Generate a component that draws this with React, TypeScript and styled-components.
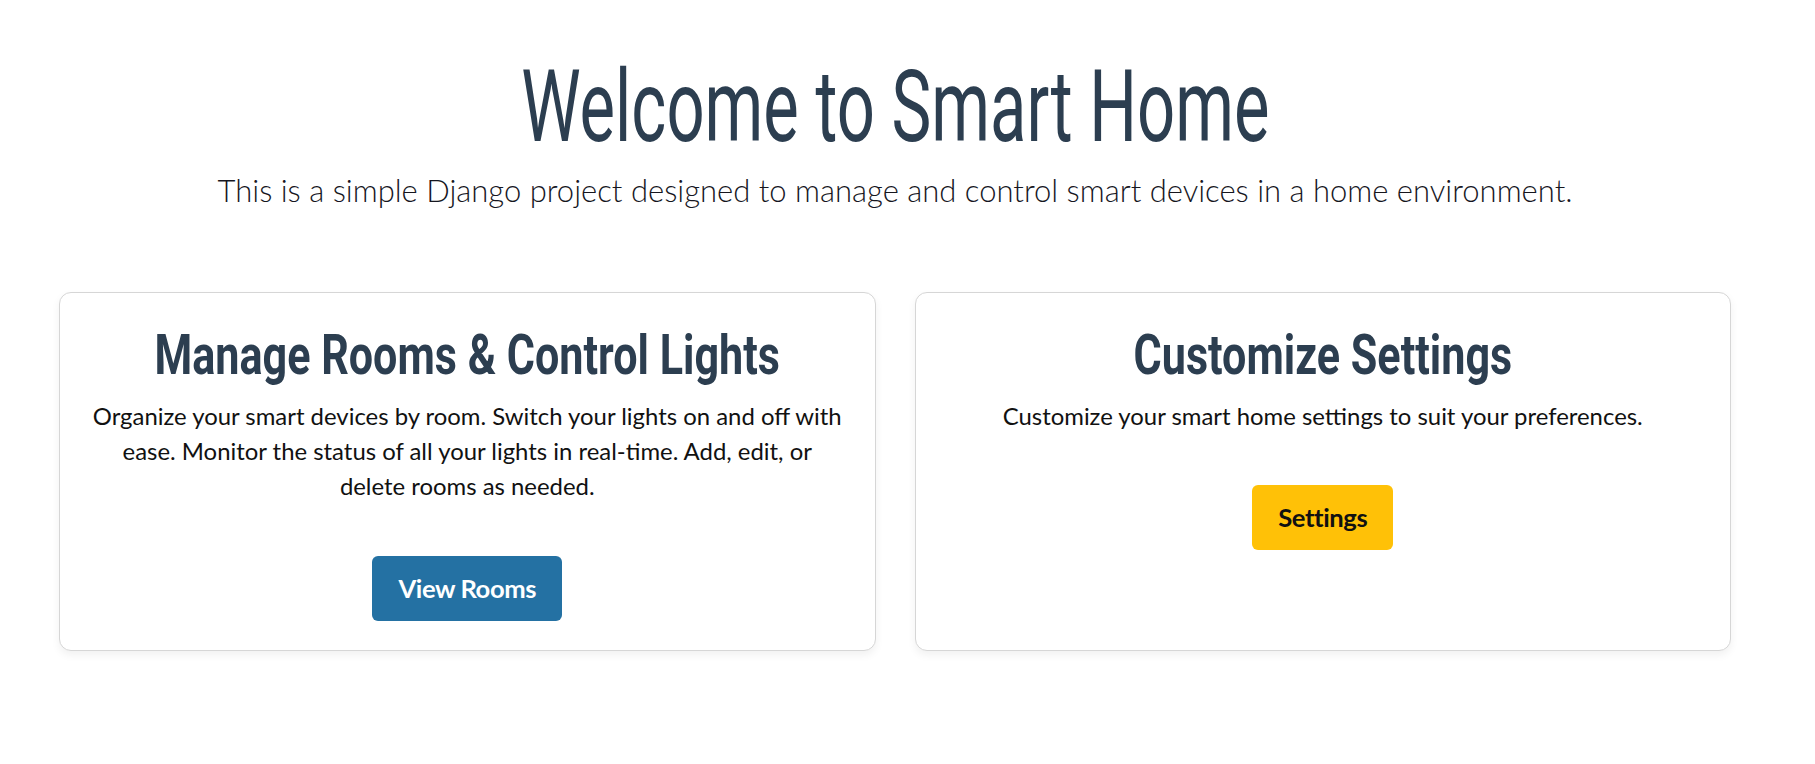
import React from "react";
import styled, { createGlobalStyle } from "styled-components";

const GlobalStyle = createGlobalStyle`
  html, body { margin: 0; padding: 0; background: #ffffff; }
  body { font-family: Lato, "Open Sans", sans-serif; color: #212529; }
  * { box-sizing: border-box; }
`;

const Page = styled.main`
  padding: 0 84px 40px 59px;
`;

const Hero = styled.header`
  display: flex;
  flex-direction: column;
  align-items: center;
  padding-top: 56px;
`;

const Title = styled.h1`
  margin: 0;
  font-family: Roboto, "Liberation Sans", sans-serif;
  font-weight: 400;
  font-size: 101px;
  line-height: 1;
  color: #2c3e50;
  white-space: nowrap;
  transform: scaleX(0.663);
`;

const Lead = styled.p`
  margin: 14px 0 0;
  font-family: Lato, sans-serif;
  font-weight: 300;
  font-size: 31px;
  line-height: 1.24;
  color: #16161e;
  white-space: nowrap;
`;

const Grid = styled.section`
  display: grid;
  grid-template-columns: repeat(2, minmax(0, 1fr));
  gap: 39px;
  margin-top: 83px;
`;

const Card = styled.article`
  min-width: 0;
  display: flex;
  flex-direction: column;
  align-items: center;
  text-align: center;
  padding: 29px 30px 29px;
  border: 1px solid #d6d6d6;
  border-radius: 12px;
  background: #fff;
  box-shadow: 0 4px 8px rgba(0, 0, 0, 0.06);
`;

const CardTitle = styled.h2`
  margin: 0;
  font-family: Roboto, "Liberation Sans", sans-serif;
  font-weight: 700;
  font-size: 56px;
  line-height: 1.2;
  color: #2c3e50;
  white-space: nowrap;
  transform: scaleX(0.77);
`;

const CardText = styled.p`
  margin: 8px 0 0;
  font-size: 23.9px;
  line-height: 35.3px;
  color: #111;
`;

const Button = styled.a<{ $variant: "primary" | "warning" }>`
  display: inline-flex;
  align-items: center;
  justify-content: center;
  margin-top: 52px;
  height: 65px;
  padding: 0 26px;
  border-radius: 6px;
  font-family: Lato, sans-serif;
  font-weight: 700;
  font-size: 25.6px;
  text-decoration: none;
  letter-spacing: -0.4px;
  background: ${(p) => (p.$variant === "primary" ? "#2471a3" : "#ffc107")};
  color: ${(p) => (p.$variant === "primary" ? "#ffffff" : "#111111")};
`;

export default function App() {
  return (
    <>
      <GlobalStyle />
      <Page>
        <Hero>
          <Title>Welcome to Smart Home</Title>
          <Lead>
            This is a simple Django project designed to manage and control smart devices in a home environment.
          </Lead>
        </Hero>
        <Grid>
          <Card>
            <CardTitle>Manage Rooms &amp; Control Lights</CardTitle>
            <CardText>
              Organize your smart devices by room. Switch your lights on and off with
              <br />
              ease. Monitor the status of all your lights in real-time. Add, edit, or
              <br />
              delete rooms as needed.
            </CardText>
            <Button href="#" $variant="primary">View Rooms</Button>
          </Card>
          <Card>
            <CardTitle>Customize Settings</CardTitle>
            <CardText>Customize your smart home settings to suit your preferences.</CardText>
            <Button href="#" $variant="warning">Settings</Button>
          </Card>
        </Grid>
      </Page>
    </>
  );
}
